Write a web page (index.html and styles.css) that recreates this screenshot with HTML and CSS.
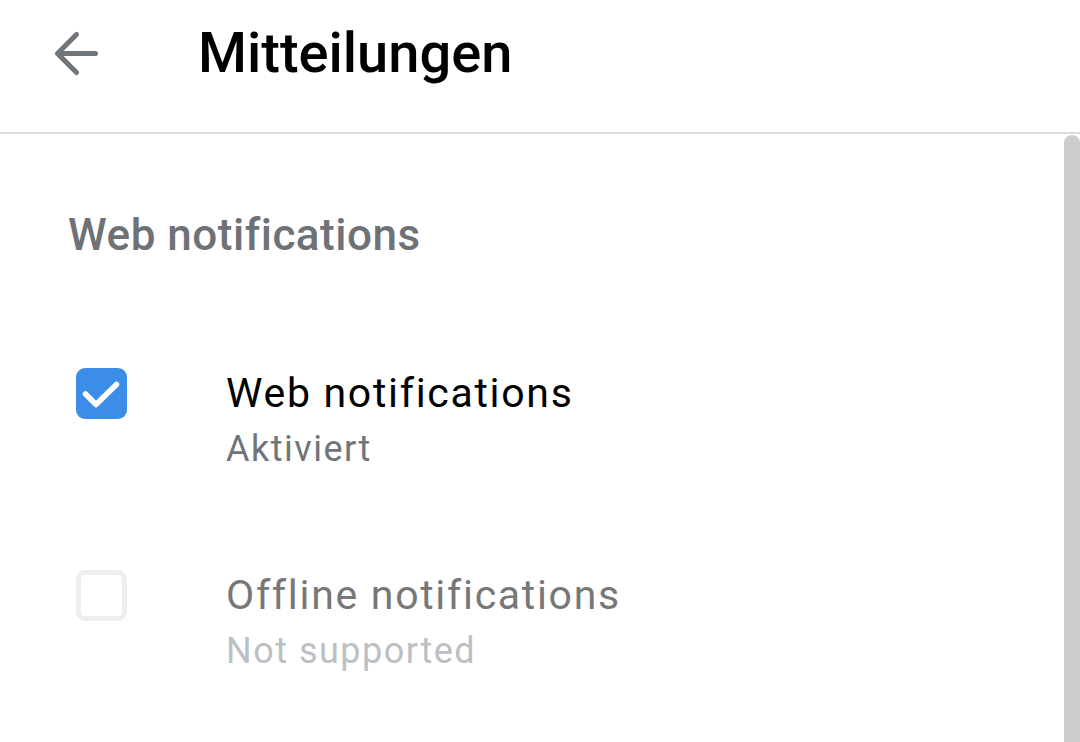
FILE: index.html
```html
<!DOCTYPE html>
<html lang="de">
<head>
<meta charset="utf-8">
<title>Mitteilungen</title>
<link rel="stylesheet" href="styles.css">
</head>
<body>
<header class="appbar">
  <button class="back" aria-label="Zurück">
    <svg viewBox="0 0 48 48" width="48" height="48" aria-hidden="true">
      <path d="M5.5 24.5H43.5M24.5 5.5L5.5 24.5L24.5 43.5" fill="none" stroke="#70757a" stroke-width="5" stroke-linecap="round" stroke-linejoin="round"/>
    </svg>
  </button>
  <h1 class="appbar-title">Mitteilungen</h1>
</header>
<main class="content">
  <div class="scroll-area">
    <h2 class="section-title">Web notifications</h2>
    <ul class="list">
      <li class="item">
        <span class="checkbox checked">
          <svg viewBox="0 0 51 51" width="51" height="51" aria-hidden="true">
            <polyline points="9.5,26 20,36.5 40.5,16.5" fill="none" stroke="#fff" stroke-width="5.5" stroke-linecap="round" stroke-linejoin="round"/>
          </svg>
        </span>
        <div class="text">
          <div class="title">Web notifications</div>
          <div class="subtitle">Aktiviert</div>
        </div>
      </li>
      <li class="item disabled">
        <span class="checkbox"></span>
        <div class="text">
          <div class="title">Offline notifications</div>
          <div class="subtitle">Not supported</div>
        </div>
      </li>
    </ul>
  </div>
  <div class="scrollbar" aria-hidden="true"></div>
</main>
</body>
</html>
```
FILE: styles.css
```css
html, body {
  margin: 0;
  padding: 0;
  height: 100%;
}
body {
  background: #ffffff;
  font-family: Roboto, "Noto Sans", "Liberation Sans", sans-serif;
  display: flex;
  flex-direction: column;
  overflow: hidden;
}
.appbar {
  height: 132px;
  flex: none;
  border-bottom: 2px solid #dcdcdc;
  display: flex;
  align-items: flex-start;
  padding-left: 52px;
}
.back {
  margin: 29px 0 0 0;
  padding: 0;
  border: 0;
  background: none;
  width: 48px;
  height: 48px;
  display: block;
}
.back svg {
  display: block;
}
.appbar-title {
  margin: 25px 0 0 98px;
  font-size: 56px;
  line-height: 57px;
  font-weight: 500;
  color: #000;
  letter-spacing: 0;
}
.content {
  flex: 1;
  display: flex;
  min-height: 0;
}
.scroll-area {
  flex: 1;
  padding-top: 75px;
}
.scrollbar {
  flex: none;
  width: 16px;
  margin-top: 1px;
  background: #cdcdcd;
  border-radius: 8px 8px 0 0;
}
.section-title {
  margin: 0 0 0 68px;
  font-size: 44px;
  line-height: 52px;
  font-weight: 500;
  letter-spacing: 0.5px;
  color: #6e7277;
}
.list {
  list-style: none;
  margin: 107px 0 0 0;
  padding: 0 0 0 76px;
  display: flex;
  flex-direction: column;
  gap: 101px;
}
.item {
  display: flex;
  align-items: flex-start;
  gap: 99px;
}
.checkbox {
  flex: none;
  width: 51px;
  height: 51px;
  box-sizing: border-box;
  border-radius: 9px;
  border: 5px solid #eceef0;
  background: #fff;
  display: block;
}
.checkbox.checked {
  border: 0;
  background: #3b8de8;
}
.checkbox svg {
  display: block;
}
.text {
  display: flex;
  flex-direction: column;
  gap: 12px;
  padding-top: 1px;
}
.title {
  font-size: 41px;
  line-height: 48px;
  letter-spacing: 1.7px;
  color: #000;
}
.subtitle {
  font-size: 36px;
  line-height: 40px;
  letter-spacing: 1.5px;
  color: #70757a;
}
.disabled .title {
  color: #777777;
}
.disabled .subtitle {
  color: #bcbfc3;
}
```
